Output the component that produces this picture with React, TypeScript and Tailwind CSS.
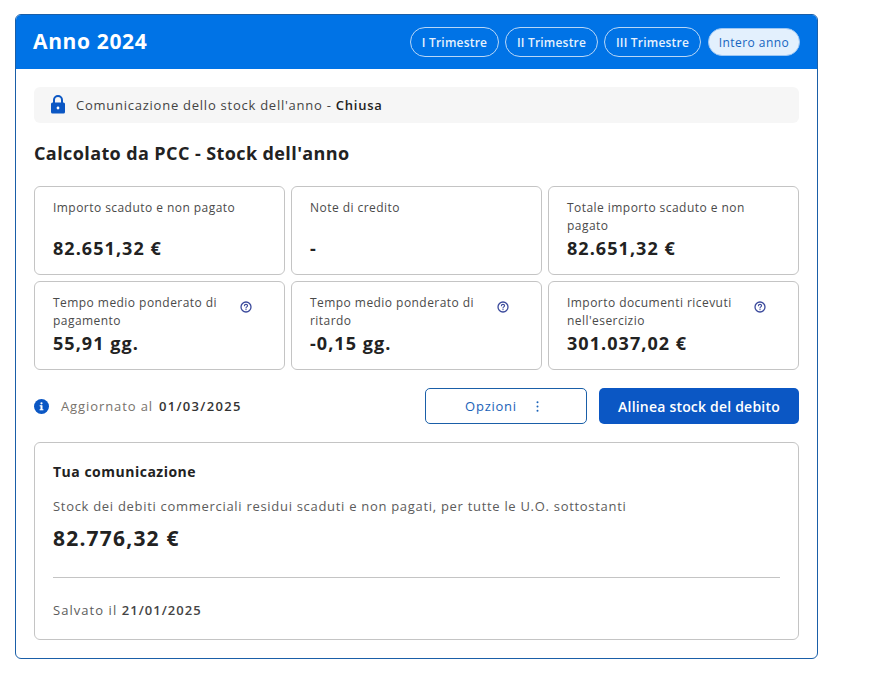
const periods = [
  { label: "I Trimestre", width: "w-[89px]" },
  { label: "II Trimestre", width: "w-[93px]" },
  { label: "III Trimestre", width: "w-[97px]" },
];

const stats = [
  { label: "Importo scaduto e non pagato", value: "82.651,32 €" },
  { label: "Note di credito", value: "-" },
  { label: "Totale importo scaduto e non pagato", value: "82.651,32 €" },
  { label: "Tempo medio ponderato di pagamento", value: "55,91 gg.", help: true },
  { label: "Tempo medio ponderato di ritardo", value: "-0,15 gg.", help: true },
  { label: "Importo documenti ricevuti nell'esercizio", value: "301.037,02 €", help: true },
];

function HelpIcon() {
  return (
    <svg width="12" height="12" viewBox="0 0 12 12" fill="none" className="shrink-0">
      <circle cx="6" cy="6" r="5" stroke="#3b4a9c" strokeWidth="1.3" />
      <path d="M4.4 4.8C4.4 3.9 5.1 3.4 6 3.4s1.6.5 1.6 1.3c0 1.1-1.6 1.2-1.6 2.2" stroke="#3b4a9c" strokeWidth="1.1" strokeLinecap="round" />
      <circle cx="6" cy="8.6" r=".7" fill="#3b4a9c" />
    </svg>
  );
}

function StatCard({ label, value, help }: { label: string; value: string; help?: boolean }) {
  return (
    <div className="h-[89px] rounded-[6px] border border-[#c4c4c4] pl-[18px] pr-[32px] pt-[12px] flex items-start">
      <div className="flex-1 min-w-0">
        <div className="h-[36px] text-[12px] leading-[18px] tracking-[0.45px] text-[#4a4a4a]">{label}</div>
        <div className="text-[18px] leading-[24px] font-bold tracking-[1.05px] text-[#222222] mt-[1px]">{value}</div>
      </div>
      {help && (
        <div className="ml-[14px] pt-[7px]">
          <HelpIcon />
        </div>
      )}
    </div>
  );
}

export default function App() {
  return (
    <div className="min-h-[688px] bg-white pt-[14px] pl-[15px] font-['Open_Sans',sans-serif]">
      <div className="w-[803px] h-[645px] rounded-[6px] border border-[#1a5fa8] overflow-hidden">
        <div className="-mx-px -mt-px h-[55px] bg-[#0073e6] flex items-center justify-between pl-[18px] pr-[18px]">
          <h1 className="text-[21px] font-bold tracking-[0.65px] text-white">Anno 2024</h1>
          <div className="flex items-center gap-[6px]">
            {periods.map((p) => (
              <div
                key={p.label}
                className={`${p.width} h-[30px] pt-[2px] rounded-full border border-[#b9d7f7] flex items-center justify-center text-[12px] font-semibold tracking-[0.2px] text-[#e6f1fd]`}
              >
                {p.label}
              </div>
            ))}
            <div className="w-[92px] h-[28px] pt-[2px] ml-px rounded-full bg-[#e3f0fd] border border-[#9cc6f3] flex items-center justify-center text-[12px] tracking-[0.45px] text-[#1565c0]">
              Intero anno
            </div>
          </div>
        </div>

        <div className="px-[18px] pt-[18px]">
          <div className="h-[36px] rounded-[6px] bg-[#f6f6f6] flex items-center pl-[16px] gap-[10px] text-[13px] tracking-[0.75px] text-[#444444]">
            <svg width="16" height="19" viewBox="0 0 16 19" className="shrink-0 -mt-[1px]">
              <path d="M4 8V5a4 4 0 0 1 8 0v3" fill="none" stroke="#0b57c4" strokeWidth="2" />
              <rect x="1" y="7.5" width="14" height="11" rx="1.5" fill="#0b57c4" />
              <circle cx="8" cy="13" r="1.4" fill="#fff" />
            </svg>
            <span className="pt-[2px]">
              Comunicazione dello stock dell'anno - <span className="font-semibold text-[#222222]">Chiusa</span>
            </span>
          </div>

          <h2 className="mt-[18px] mb-[21px] text-[18px] leading-[24px] font-bold tracking-[0.4px] text-[#222222]">
            Calcolato da PCC - Stock dell'anno
          </h2>

          <div className="grid grid-cols-3 gap-[6px]">
            {stats.map((s) => (
              <StatCard key={s.label} label={s.label} value={s.value} help={s.help} />
            ))}
          </div>

          <div className="mt-[18px] h-[36px] flex items-center">
            <svg width="15" height="15" viewBox="0 0 15 15" className="shrink-0">
              <circle cx="7.5" cy="7.5" r="7.5" fill="#0b57c4" />
              <rect x="6.5" y="6.3" width="2" height="4.6" fill="#fff" />
              <rect x="5.6" y="10.2" width="3.8" height="1.1" fill="#fff" />
              <rect x="5.6" y="6.3" width="2" height="1" fill="#fff" />
              <circle cx="7.5" cy="4.3" r="1.1" fill="#fff" />
            </svg>
            <span className="ml-[12px] pt-[1px] text-[13px] tracking-[0.9px] text-[#77726c]">Aggiornato al</span>
            <span className="ml-[6px] pt-[1px] text-[13px] font-semibold tracking-[1.3px] text-[#333333]">01/03/2025</span>
            <button className="ml-auto w-[162px] h-[36px] pr-[8px] pt-[2px] rounded-[5px] border border-[#1a5fa8] flex items-center justify-center gap-[19px] text-[13px] tracking-[0.75px] text-[#1a62b8]">
              Opzioni
              <svg width="3" height="11" viewBox="0 0 3 11" fill="#1a62b8" className="-mt-[2px]">
                <circle cx="1.5" cy="1.2" r="1" />
                <circle cx="1.5" cy="5.5" r="1" />
                <circle cx="1.5" cy="9.8" r="1" />
              </svg>
            </button>
            <button className="ml-[12px] w-[200px] h-[36px] rounded-[5px] bg-[#0b57c4] flex items-center justify-center text-[14px] font-semibold tracking-[0.2px] text-white">
              Allinea stock del debito
            </button>
          </div>

          <div className="mt-[18px] h-[198px] rounded-[6px] border border-[#c4c4c4] px-[18px] pt-[20px]">
            <h3 className="text-[14px] leading-[18px] font-bold tracking-[0.5px] text-[#222222]">Tua comunicazione</h3>
            <p className="mt-[16px] text-[13px] leading-[18px] tracking-[0.7px] text-[#5c5c5c]">
              Stock dei debiti commerciali residui scaduti e non pagati, per tutte le U.O. sottostanti
            </p>
            <div className="mt-[9px] text-[21px] leading-[28px] font-bold tracking-[1.2px] text-[#222222]">82.776,32 €</div>
            <hr className="mt-[25px] border-[#c4c4c4]" />
            <p className="mt-[23px] text-[13px] leading-[18px] tracking-[1.05px] text-[#5c5c5c]">
              Salvato il <span className="font-semibold text-[#444444]">21/01/2025</span>
            </p>
          </div>
        </div>
      </div>
    </div>
  );
}
